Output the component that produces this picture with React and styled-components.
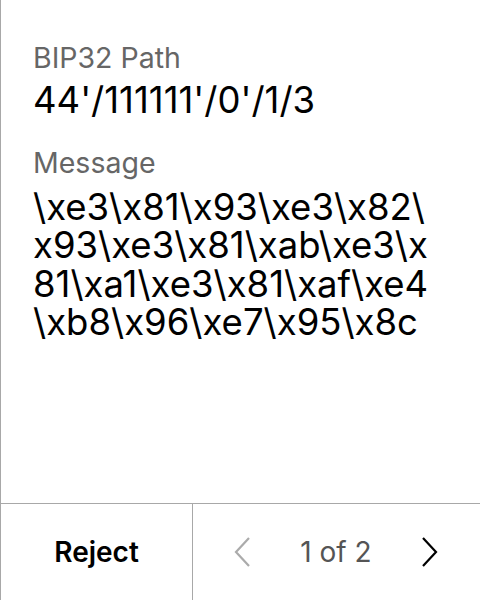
import React from 'react'
import styled, { createGlobalStyle } from 'styled-components'

const GlobalStyle = createGlobalStyle`
  html, body {
    margin: 0;
    padding: 0;
    background: #fff;
  }
  body {
    font-family: Inter, "Noto Sans", sans-serif;
    color: #000;
  }
`

const Screen = styled.div`
  width: 480px;
  height: 600px;
  box-sizing: border-box;
  border-left: 1px solid #a8a8a8;
  display: flex;
  flex-direction: column;
`

const Content = styled.div`
  flex: 1;
  padding: 41px 0 0 32px;
  display: flex;
  flex-direction: column;
`

const Field = styled.div`
  display: flex;
  flex-direction: column;
  gap: ${p => p.$gap || 6}px;
  margin-bottom: 26px;
`

const Label = styled.div`
  font-size: 28.5px;
  line-height: 34px;
  color: #666;
`

// the device wraps long values at any character
const Value = styled.div`
  width: 407px;
  font-size: 36.5px;
  line-height: 38.5px;
  color: #000;
  word-break: break-all;
  line-break: anywhere;
`

const Footer = styled.div`
  height: 96px;
  border-top: 1px solid #a8a8a8;
  display: flex;
`

const RejectButton = styled.button`
  width: 192px;
  border: none;
  border-right: 1px solid #a8a8a8;
  background: none;
  font-family: inherit;
  font-size: 28px;
  font-weight: 600;
  color: #000;
  padding: 0;
`

const Pager = styled.div`
  flex: 1;
  display: flex;
  align-items: center;
  justify-content: space-between;
  padding: 0 40px 0 39px;
`

const NavButton = styled.button`
  border: none;
  background: none;
  padding: 0;
  display: flex;
  color: ${p => (p.disabled ? '#ababab' : '#000')};
`

const PageText = styled.span`
  font-size: 28px;
  color: #555;
`

const Chevron = ({ left }) => (
  <svg width="20" height="32" viewBox="0 0 20 32" fill="none">
    <path
      d={left ? 'M17 2 L4 16 L17 30' : 'M3 2 L16 16 L3 30'}
      stroke="currentColor"
      strokeWidth="2.2"
    />
  </svg>
)

export default function App() {
  return (
    <>
      <GlobalStyle />
      <Screen>
        <Content>
          <Field>
            <Label>BIP32 Path</Label>
            <Value>44'/111111'/0'/1/3</Value>
          </Field>
          <Field $gap={8}>
            <Label>Message</Label>
            <Value>\xe3\x81\x93\xe3\x82\x93\xe3\x81\xab\xe3\x81\xa1\xe3\x81\xaf\xe4\xb8\x96\xe7\x95\x8c</Value>
          </Field>
        </Content>
        <Footer>
          <RejectButton>Reject</RejectButton>
          <Pager>
            <NavButton disabled>
              <Chevron left />
            </NavButton>
            <PageText>1 of 2</PageText>
            <NavButton>
              <Chevron />
            </NavButton>
          </Pager>
        </Footer>
      </Screen>
    </>
  )
}
